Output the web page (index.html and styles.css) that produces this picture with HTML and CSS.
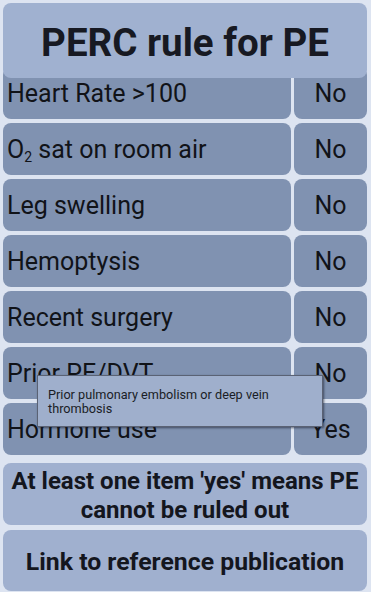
FILE: index.html
```html
<!DOCTYPE html>
<html>
<head>
<meta charset="utf-8">
<link rel="stylesheet" href="styles.css">
</head>
<body>
<div class="page">
  <div class="header">PERC rule for PE</div>
  <div class="rows">
    <div class="label"><span>Heart Rate &gt;100</span></div><div class="answer">No</div>
    <div class="label"><span>O<sub>2</sub> sat on room air</span></div><div class="answer">No</div>
    <div class="label"><span>Leg swelling</span></div><div class="answer">No</div>
    <div class="label"><span>Hemoptysis</span></div><div class="answer">No</div>
    <div class="label"><span>Recent surgery</span></div><div class="answer">No</div>
    <div class="label"><span>Prior PE/DVT</span></div><div class="answer">No</div>
    <div class="label"><span>Hormone use</span></div><div class="answer">Yes</div>
  </div>
  <div class="result">At least one item 'yes' means PE<br>cannot be ruled out</div>
  <div class="link">Link to reference publication</div>
  <div class="tooltip">Prior pulmonary embolism or deep vein thrombosis</div>
</div>
</body>
</html>
```
FILE: styles.css
```css
html, body {
  margin: 0;
  padding: 0;
  background: #dde4f1;
}
body {
  font-family: Roboto, "Noto Sans", sans-serif;
  color: #14161e;
  width: 371px;
  height: 592px;
  overflow: hidden;
}
.page {
  position: relative;
  padding: 3px 4px 0 3px;
  display: flex;
  flex-direction: column;
}
.header {
  position: relative;
  z-index: 1;
  height: 75px;
  margin-bottom: -11px;
  background: #a0b1d0;
  border-radius: 8px;
  display: flex;
  align-items: center;
  justify-content: center;
  font-size: 38.5px;
  font-weight: 700;
  padding-top: 4px;
  box-sizing: border-box;
  color: #171922;
}
.rows {
  display: grid;
  grid-template-columns: 1fr 73px;
  grid-auto-rows: 52px;
  column-gap: 3px;
  row-gap: 4px;
}
.label, .answer {
  background: #8092b1;
  border-radius: 8px;
  display: flex;
  align-items: center;
  font-size: 25px;
  color: #111318;
}
.label {
  padding-left: 4px;
  white-space: nowrap;
}
.answer {
  justify-content: center;
}
.label sub {
  font-size: 14px;
  vertical-align: -4px;
  line-height: 0;
}
.result {
  margin-top: 8px;
  height: 62px;
  background: #a0b0cf;
  border-radius: 8px;
  font-size: 24px;
  font-weight: 700;
  line-height: 29px;
  text-align: center;
  display: flex;
  align-items: center;
  justify-content: center;
  white-space: nowrap;
  padding-top: 3px;
  box-sizing: border-box;
}
.link {
  margin-top: 5px;
  height: 61px;
  background: #a0b0cf;
  border-radius: 8px;
  font-size: 24.8px;
  font-weight: 700;
  display: flex;
  align-items: center;
  justify-content: center;
  padding-top: 2px;
  box-sizing: border-box;
}
.tooltip {
  position: absolute;
  left: 37px;
  top: 375px;
  width: 286px;
  height: 52px;
  box-sizing: border-box;
  background: #9fafcc;
  border: 1px solid #5a6274;
  box-shadow: 1px 1px 2px rgba(20, 25, 40, 0.6);
  padding: 12px 10px 0 10px;
  font-size: 12.7px;
  line-height: 14px;
  color: #1a1d26;
  z-index: 2;
}
```
